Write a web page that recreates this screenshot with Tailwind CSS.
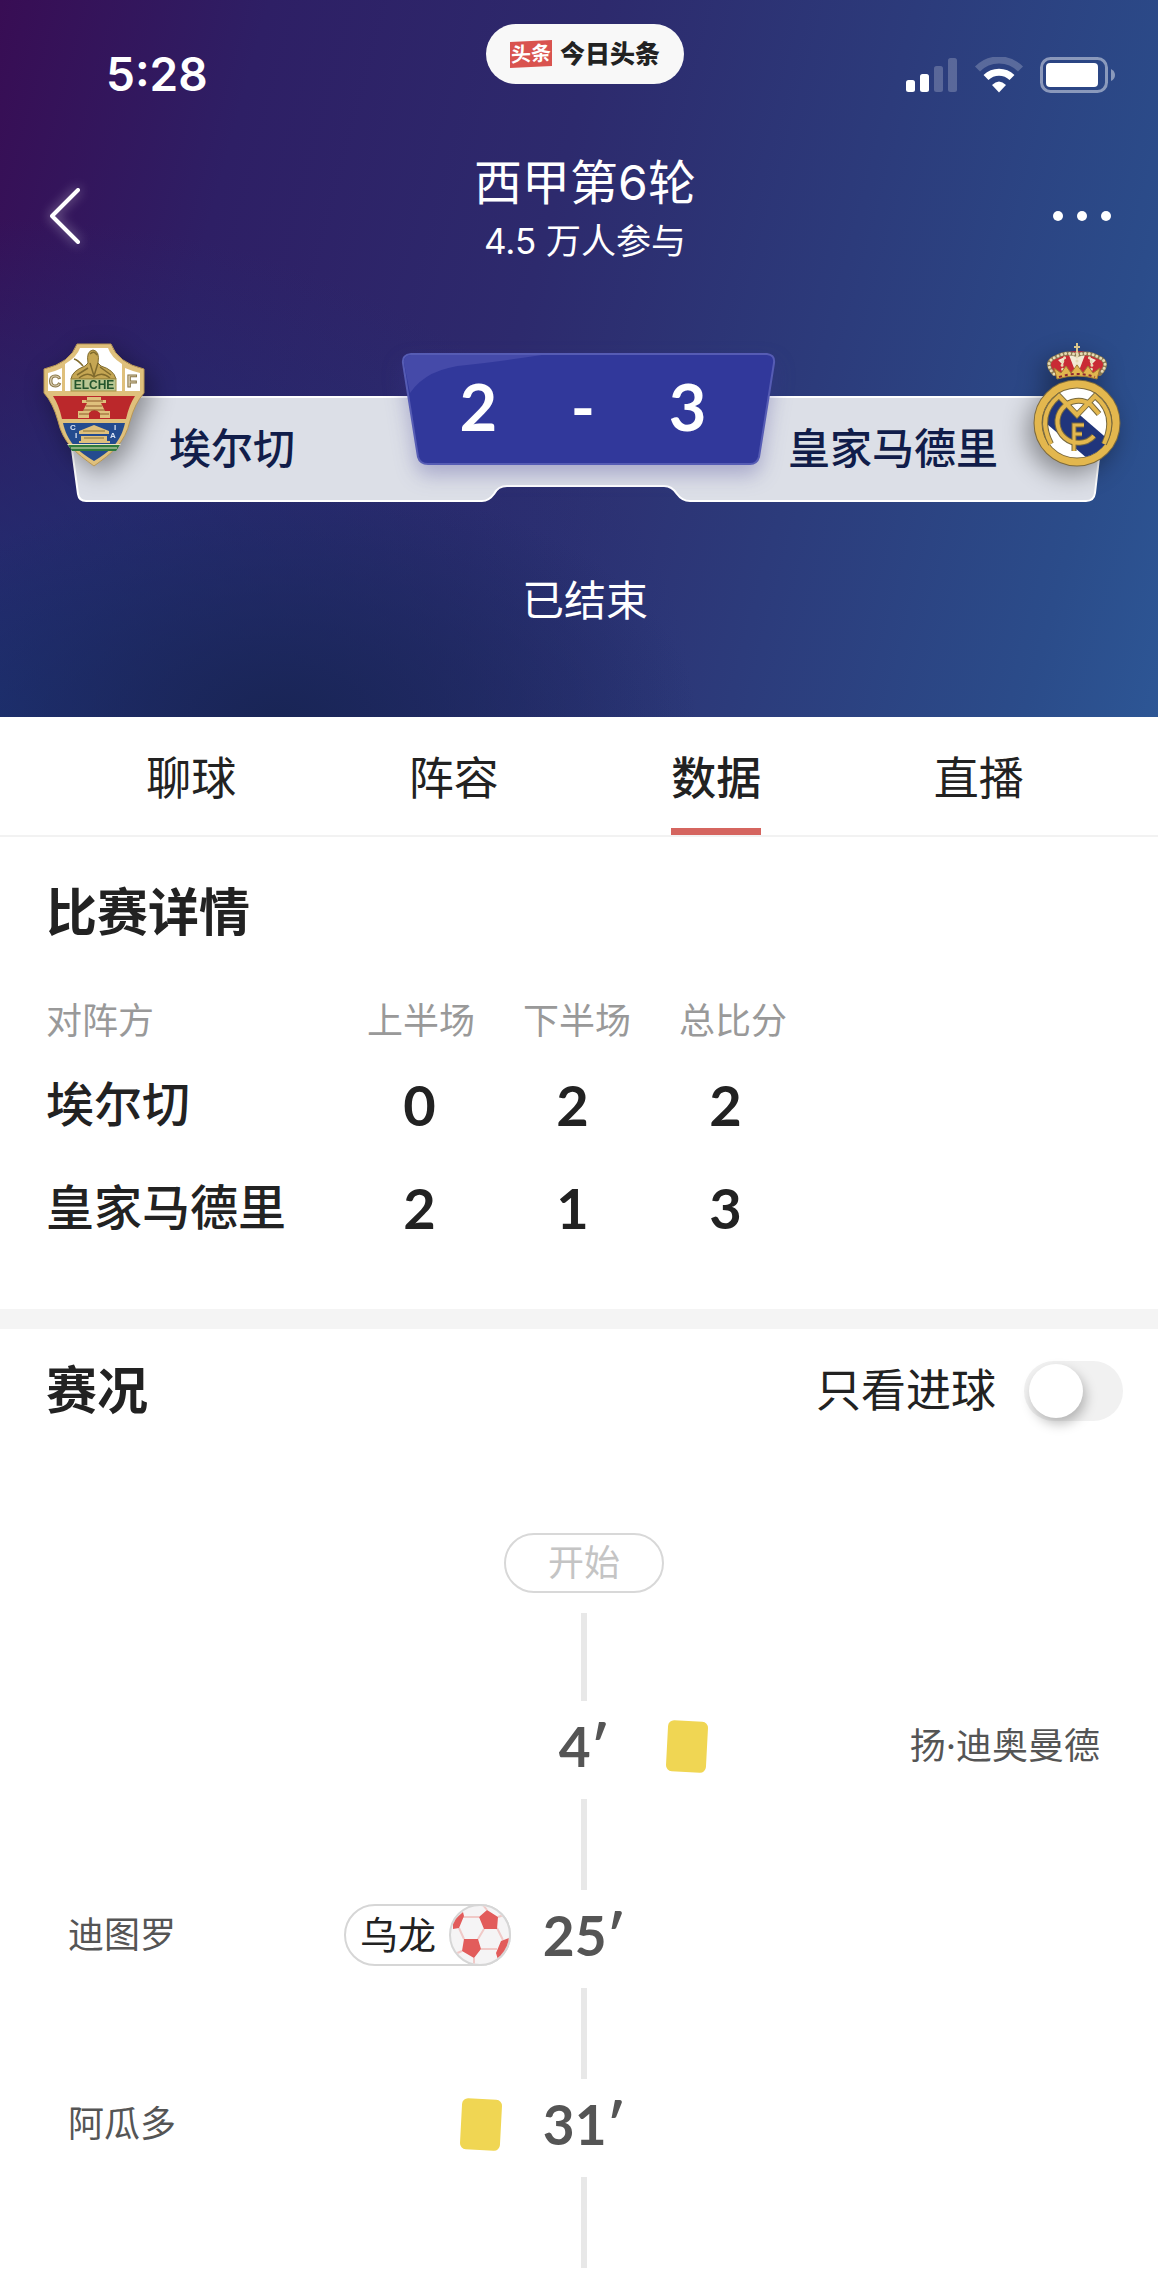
<!DOCTYPE html>
<html lang="zh-CN">
<head>
  <meta charset="UTF-8" />
  <meta name="viewport" content="width=device-width, initial-scale=1.0" />
  <title>西甲第6轮 埃尔切 2 - 3 皇家马德里</title>
  <script src="https://cdn.jsdelivr.net/npm/@tailwindcss/browser@4"></script>
</head>
<body class="bg-white text-[#222222] font-['Inter','Noto_Sans_CJK_SC',sans-serif]">

  <header class="text-white bg-[radial-gradient(ellipse_420px_240px_at_24%_100%,#192556_0%,#19255600_100%),radial-gradient(ellipse_700px_500px_at_0%_100%,#1e3376_0%,#1e337600_100%),linear-gradient(105deg,#380d54_0%,#2e1f65_20%,#2d2a6d_45%,#2c3b7b_68%,#2b4c8a_90%,#2d5695_100%)]">
    <!-- status bar -->
    <div class="grid grid-cols-[1fr_auto_1fr] h-[100px] pt-6 pl-3">
      <p class="self-end pl-[94px] text-[46px] leading-[52px] font-semibold">5:28</p>
      <div class="flex items-center gap-2 w-[198px] h-[60px] pl-6 rounded-full bg-[#f8f8f8]">
        <span class="flex items-center justify-center w-[42px] h-[26px] -skew-y-3 bg-[#d9534f] text-xl leading-7 font-bold">头条</span>
        <span class="text-[25px] leading-9 font-black text-[#222222]">今日头条</span>
      </div>
      <div class="self-end justify-self-end flex items-center gap-4 h-[50px] pr-[42px]">
        <svg class="w-[52px] h-9" viewBox="0 0 52 36" fill="#fff">
          <rect x="0" y="23" width="9" height="12" rx="2.5" />
          <rect x="14" y="17" width="9" height="18" rx="2.5" />
          <rect x="28" y="9" width="9" height="26" rx="2.5" opacity=".22" />
          <rect x="42" y="1" width="9" height="34" rx="2.5" opacity=".22" />
        </svg>
        <svg class="w-[50px] h-9" viewBox="0 0 50 36" fill="none" stroke="#fff">
          <path d="M3.500 12 A30 30 0 0 1 46.500 12" stroke-width="7" opacity=".22" />
          <path d="M12 20.500 A18.500 18.500 0 0 1 38 20.500" stroke-width="7" />
          <path d="M18 28 Q25 21 32 28 L25 35.500Z" fill="#fff" stroke="none" />
        </svg>
        <svg class="w-[76px] h-9" viewBox="0 0 76 36">
          <rect x="1.500" y="1.500" width="65" height="33" rx="9" fill="none" stroke="#fff" stroke-width="3" opacity=".45" />
          <rect x="6" y="6" width="52" height="24" rx="4" fill="#fff" />
          <path d="M71 12 Q75 14 75 18 Q75 22 71 24Z" fill="#fff" opacity=".45" />
        </svg>
      </div>
    </div>

    <!-- title bar -->
    <div class="grid grid-cols-[1fr_auto_1fr] mt-[51px] pl-3">
      <button class="self-end flex items-center h-[102px] pl-9" aria-label="返回">
        <svg class="w-9 h-16 drop-shadow-[0_0_6px_#ffffff80]" viewBox="0 0 36 64" fill="none" stroke="#fff" stroke-width="4" stroke-linecap="round" stroke-linejoin="round"><path d="M30 6 L4 32 L30 58" /></svg>
      </button>
      <div class="text-center">
        <h1 class="text-[48px] leading-[64px]">西甲第6轮</h1>
        <p class="text-[35px] leading-[52px]">4.5 万人参与</p>
      </div>
      <button class="self-end justify-self-end flex items-center gap-[14px] h-[102px] pr-[47px]" aria-label="更多">
        <span class="size-[10px] rounded-full bg-white"></span>
        <span class="size-[10px] rounded-full bg-white"></span>
        <span class="size-[10px] rounded-full bg-white"></span>
      </button>
    </div>

    <!-- score board -->
    <div class="relative mt-[76px] grid grid-cols-[102px_1fr_374px_1fr_88px] items-start h-[160px] pl-[43px] pr-[37px]">
      <svg class="absolute inset-0 w-full h-full" viewBox="0 0 1158 160" preserveAspectRatio="none">
        <path d="M65 54 H1106 L1095 150 Q1094 158 1086 158 H690 Q682 158 677 151 Q672 143 664 143 H507 Q498 143 494 151 Q489 158 482 158 H86 Q79 158 78 151Z" fill="#dcdfe7" stroke="#fff" stroke-width="2" />
      </svg>

      <svg class="relative w-[102px] h-[124px] drop-shadow-[6px_8px_12px_#00000060]" viewBox="0 0 102 124" font-family="Liberation Sans, sans-serif" font-weight="bold">
        <path d="M34 1 H68 Q75 20 101 26 V50 Q92 60 87 78 C82 100 69 110 51 123 C33 110 20 100 15 78 Q10 60 1 50 V26 Q27 20 34 1Z" fill="#dfc07c" stroke="#b89654" stroke-width="1" />
        <path d="M37 5 H65 Q68 14 79 21 V48 H22 V21 Q34 14 37 5Z" fill="#fff" />
        <path d="M5 30 Q13 28 19 25 V48 H5Z M97 30 Q89 28 82 25 V48 H97Z" fill="#fff" />
        <path d="M10 53 H92 Q86 62 83 76 H19 Q16 62 10 53Z" fill="#bb282b" />
        <path d="M20 80 H82 C78 98 69 107 51 118 C33 107 24 98 20 80Z" fill="#244b8f" />
        <path d="M24 101 H78 L75 105 H27Z" fill="#e9e3c0" />
        <path d="M25 102 H77 L73 108 H29Z" fill="#2f7b3c" />
        <path d="M28 105 H74" stroke="#e9e3c0" stroke-width="1" />
        <path d="M28 36 Q29 28 42 23 L45 20 Q43 8 50 7 Q57 8 55 20 L58 23 Q71 27 73 36Z" fill="#c5a653" stroke="#806b2d" stroke-width="1" />
        <path d="M47 11 Q51 7 54 12 M34 32 L45 25 M57 24 L68 32 M47 20 L51 33 L55 20 M36 35 Q45 28 51 34 Q59 28 67 35 M31 16 Q35 17 40 23" fill="none" stroke="#806b2d" stroke-width="1.500" />
        <rect x="28" y="36" width="45" height="12" fill="#b9c793" stroke="#a79145" stroke-width="1" />
        <text x="51" y="46" font-size="12" text-anchor="middle" fill="#24552c">ELCHE</text>
        <text x="12" y="44" font-size="17" text-anchor="middle" fill="#d9cdb0" stroke="#8d7a4a" stroke-width="1">C</text>
        <text x="89" y="44" font-size="17" text-anchor="middle" fill="#d9cdb0" stroke="#8d7a4a" stroke-width="1">F</text>
        <path d="M44 54 H58 V57 H63 V60 H58 L62 68 H67 V75 H57 V70 Q51 64 46 70 V75 H35 V68 H40 L44 60 H39 V57 H44Z" fill="#dfc07c" />
        <path d="M43 58 H60 M43 63 H59 M40 67 H62 M36 71 H46 M57 71 H66" stroke="#8f5a2b" stroke-width="1" />
        <path d="M36 88 L51 82 L66 88 V91 H36Z M38 93 H64 V98 H38Z" fill="#dfc07c" />
        <path d="M36 99 H67" stroke="#dfc07c" stroke-width="2" />
        <path d="M40 88 H62 M41 95 H61" stroke="#8c7335" stroke-width="1" />
        <g fill="#dce4f4" font-size="8"><text x="27" y="87">C</text><text x="71" y="87">I</text><text x="32" y="95">I</text><text x="67" y="95">A</text></g>
      </svg>

      <h2 class="relative mt-[53px] pl-6 text-[42px] leading-[106px] font-medium text-[#111d4a] whitespace-nowrap">埃尔切</h2>

      <div class="relative h-28 mt-[10px]">
        <svg class="absolute inset-0 w-full h-full overflow-visible drop-shadow-[0_10px_10px_#3a359050]" viewBox="0 0 374 112">
          <path d="M9 1 H365 Q373 2 372 10 L357 104 Q355 111 348 111 H26 Q18 111 16 104 L1 10 Q0 2 9 1Z" fill="#31389b" stroke="#565cb4" stroke-width="2" />
          <path d="M9 2 H140 Q100 8 65 12 Q25 15 8 40 L2 10 Q1 3 9 2Z" fill="#454aa9" />
        </svg>
        <p class="relative grid grid-cols-3 h-full pl-6 pr-9 text-center text-[65px] leading-[106px] font-bold font-['Lato',sans-serif]"><span>2</span><span>-</span><span>3</span></p>
      </div>

      <h2 class="relative mt-[53px] pl-3 text-[42px] leading-[106px] font-medium text-[#111d4a] whitespace-nowrap">皇家马德里</h2>

      <svg class="relative w-[88px] h-[124px] drop-shadow-[-6px_8px_12px_#00000060]" viewBox="0 0 88 124">
        <path d="M24 34 Q9 21 20 16 Q31 8 44 8 Q57 8 68 16 Q79 21 64 34 Q44 28 24 34Z" fill="#c92b35" />
        <path d="M36 12 Q44 8 52 12 L47 25 H41Z M25 17 L32 14 L30 22Z M63 17 L56 14 L58 22Z" fill="#f3ead5" />
        <g fill="none" stroke="#8b7a52" stroke-width="4" stroke-linecap="round">
          <path d="M21 31 Q10 19 23 14 Q33 8 44 12 Q55 8 65 14 Q78 19 67 31" />
        </g>
        <g fill="none" stroke="#e6dab4" stroke-width="3" stroke-linecap="round" stroke-dasharray="0 4">
          <path d="M21 31 Q10 19 23 14 Q33 8 44 12 Q55 8 65 14 Q78 19 67 31" />
          <path d="M31 30 Q26 20 34 12 M57 30 Q62 20 54 12 M44 10 V28" />
        </g>
        <path d="M21 25 L28 30 L33 23 L38 30 L44 22 L50 30 L55 23 L60 30 L67 25 L64 36 Q44 30 24 36Z" fill="#e2b64f" stroke="#a07a34" stroke-width="1" />
        <path d="M26 34 Q44 28 62 34" fill="none" stroke="#8d2831" stroke-width="2" stroke-dasharray="3 3" />
        <path d="M44 0 V10 M41 4 H47" stroke="#dbc68c" stroke-width="2" />
        <circle cx="44" cy="80" r="39" fill="#fff" stroke="#7d6a3c" stroke-width="9" />
        <circle cx="44" cy="80" r="39" fill="none" stroke="#e3b74e" stroke-width="7" />
        <clipPath id="disc"><circle cx="44" cy="80" r="35" /></clipPath>
        <path clip-path="url(#disc)" d="M8 76 L26 54 L84 104 L62 122Z" fill="#20357c" />
        <g fill="none" stroke="#77693f" stroke-width="6">
          <path d="M18 101 Q3 72 26 53 L44 72 L62 53 Q85 72 71 101" />
          <path d="M66 71 L58 62 A21 21 0 1 0 61 93" />
          <path d="M41 108 V82 H51 M41 91 H49" stroke-width="5" />
        </g>
        <g fill="none" stroke="#e3b74e" stroke-width="4">
          <path d="M18 101 Q3 72 26 53 L44 72 L62 53 Q85 72 71 101" />
          <path d="M66 71 L58 62 A21 21 0 1 0 61 93" />
          <path d="M41 108 V82 H51 M41 91 H49" stroke-width="3" />
        </g>
      </svg>
    </div>

    <p class="mt-[66px] pl-3 pb-[84px] text-center text-[42px] leading-[64px]">已结束</p>
  </header>

  <nav class="flex h-[120px] pl-[60px] pr-[48px] border-b-2 border-[#f2f2f2] text-[45px] leading-[124px]">
    <a href="#" class="flex-1 text-center">聊球</a>
    <a href="#" class="flex-1 text-center">阵容</a>
    <a href="#" class="flex-1 flex justify-center font-medium"><span class="border-b-7 border-[#d5655f]">数据</span></a>
    <a href="#" class="flex-1 text-center">直播</a>
  </nav>

  <section class="px-[46px] pt-10 pb-[50px] border-b-20 border-[#f4f4f4]">
    <h2 class="text-[51px] leading-[72px] font-bold">比赛详情</h2>
    <table class="block mt-[46px]">
      <thead class="block">
        <tr class="flex text-4xl leading-[52px] text-[#999999]">
          <th class="w-[297px] text-left font-normal">对阵方</th>
          <th class="w-[156px] font-normal">上半场</th>
          <th class="w-[156px] font-normal">下半场</th>
          <th class="w-[156px] font-normal">总比分</th>
        </tr>
      </thead>
      <tbody class="block pt-[6px]">
        <tr class="flex text-center text-[56px] leading-[103px] font-bold font-['Lato',sans-serif]">
          <th class="w-[297px] text-left text-[48px] font-medium font-['Inter','Noto_Sans_CJK_SC',sans-serif]">埃尔切</th>
          <td class="w-[153px]">0</td>
          <td class="w-[153px]">2</td>
          <td class="w-[153px]">2</td>
        </tr>
        <tr class="flex text-center text-[56px] leading-[103px] font-bold font-['Lato',sans-serif]">
          <th class="w-[297px] text-left text-[48px] font-medium font-['Inter','Noto_Sans_CJK_SC',sans-serif]">皇家马德里</th>
          <td class="w-[153px]">2</td>
          <td class="w-[153px]">1</td>
          <td class="w-[153px]">3</td>
        </tr>
      </tbody>
    </table>
  </section>

  <section>
    <div class="flex items-center justify-between h-[124px] pl-[46px] pr-[35px]">
      <h2 class="text-[51px] leading-[72px] font-bold">赛况</h2>
      <label class="flex items-center gap-7 text-[45px] leading-[64px]">
        只看进球
        <input type="checkbox" class="appearance-none w-[99px] h-[60px] p-[3px] pl-[5px] rounded-full bg-[#f1f1f1] before:block before:size-[54px] before:rounded-full before:bg-white before:shadow-[3px_6px_12px_#00000040] checked:before:translate-x-9" />
      </label>
    </div>

    <!-- timeline -->
    <div class="pt-20 pb-3 pl-[68px] pr-[58px] text-4xl text-[#555555]">
      <p class="w-40 h-[60px] mx-auto mb-5 rounded-full border-2 border-[#d8d8d8] text-center leading-[56px] text-[#c4c4c4]">开始</p>
      <div class="w-[6px] h-[88px] mx-auto bg-[#e8e8e8]"></div>

      <div class="grid grid-cols-[1fr_130px_1fr] items-center h-[98px] pb-2">
        <div></div>
        <p class="text-center text-[55px] leading-[64px] font-bold font-['Lato',sans-serif]">4′</p>
        <div class="flex items-center justify-between pl-[18px]">
          <span class="w-10 h-[51px] rounded-md bg-[#f0d653] rotate-3"></span>
          <span>扬·迪奥曼德</span>
        </div>
      </div>
      <div class="w-[6px] h-[91px] mx-auto bg-[#e8e8e8]"></div>

      <div class="grid grid-cols-[1fr_130px_1fr] items-center h-[98px] pb-2">
        <div class="flex items-center justify-between pr-2">
          <span>迪图罗</span>
          <span class="flex items-center justify-between w-[167px] h-[62px] pl-[14px] rounded-full border-2 border-[#d6d6d6] text-[38px] leading-[60px] text-[#222222]">
            乌龙
            <svg class="size-[62px] -mr-[2px]" viewBox="0 0 62 62">
              <clipPath id="ball"><circle cx="31" cy="31" r="29" /></clipPath>
              <circle cx="31" cy="31" r="30" fill="#f5f4f5" stroke="#d6d6d6" stroke-width="2" />
              <g clip-path="url(#ball)">
                <path d="M10 24 L15 35 M14 13 H30 M48 24 L54 36 M35 25 L29 35 M32 45 H48 M25 54 V61 M49 13 L55 11 M13 47 L6 50 M38 6 L34 1" fill="none" stroke="#f0c9c7" stroke-width="2" />
                <path d="M38 6 L49 13 L48 25 H35 L30 13Z M15 35 H29 L32 45 L25 54 L13 47Z M14 8 L4 17 L4 25 L10 24 L15 12Z M52 37 L60 34 L60 46 L49 56 L47 49Z" fill="#e25c5b" />
              </g>
            </svg>
          </span>
        </div>
        <p class="text-center text-[55px] leading-[64px] font-bold font-['Lato',sans-serif]">25′</p>
        <div></div>
      </div>
      <div class="w-[6px] h-[91px] mx-auto bg-[#e8e8e8]"></div>

      <div class="grid grid-cols-[1fr_130px_1fr] items-center h-[98px] pb-2">
        <div class="flex items-center justify-between pr-[18px]">
          <span>阿瓜多</span>
          <span class="w-10 h-[51px] rounded-md bg-[#f0d653] rotate-3"></span>
        </div>
        <p class="text-center text-[55px] leading-[64px] font-bold font-['Lato',sans-serif]">31′</p>
        <div></div>
      </div>
      <div class="w-[6px] h-[91px] mx-auto bg-[#e8e8e8]"></div>
    </div>
  </section>

</body>
</html>
